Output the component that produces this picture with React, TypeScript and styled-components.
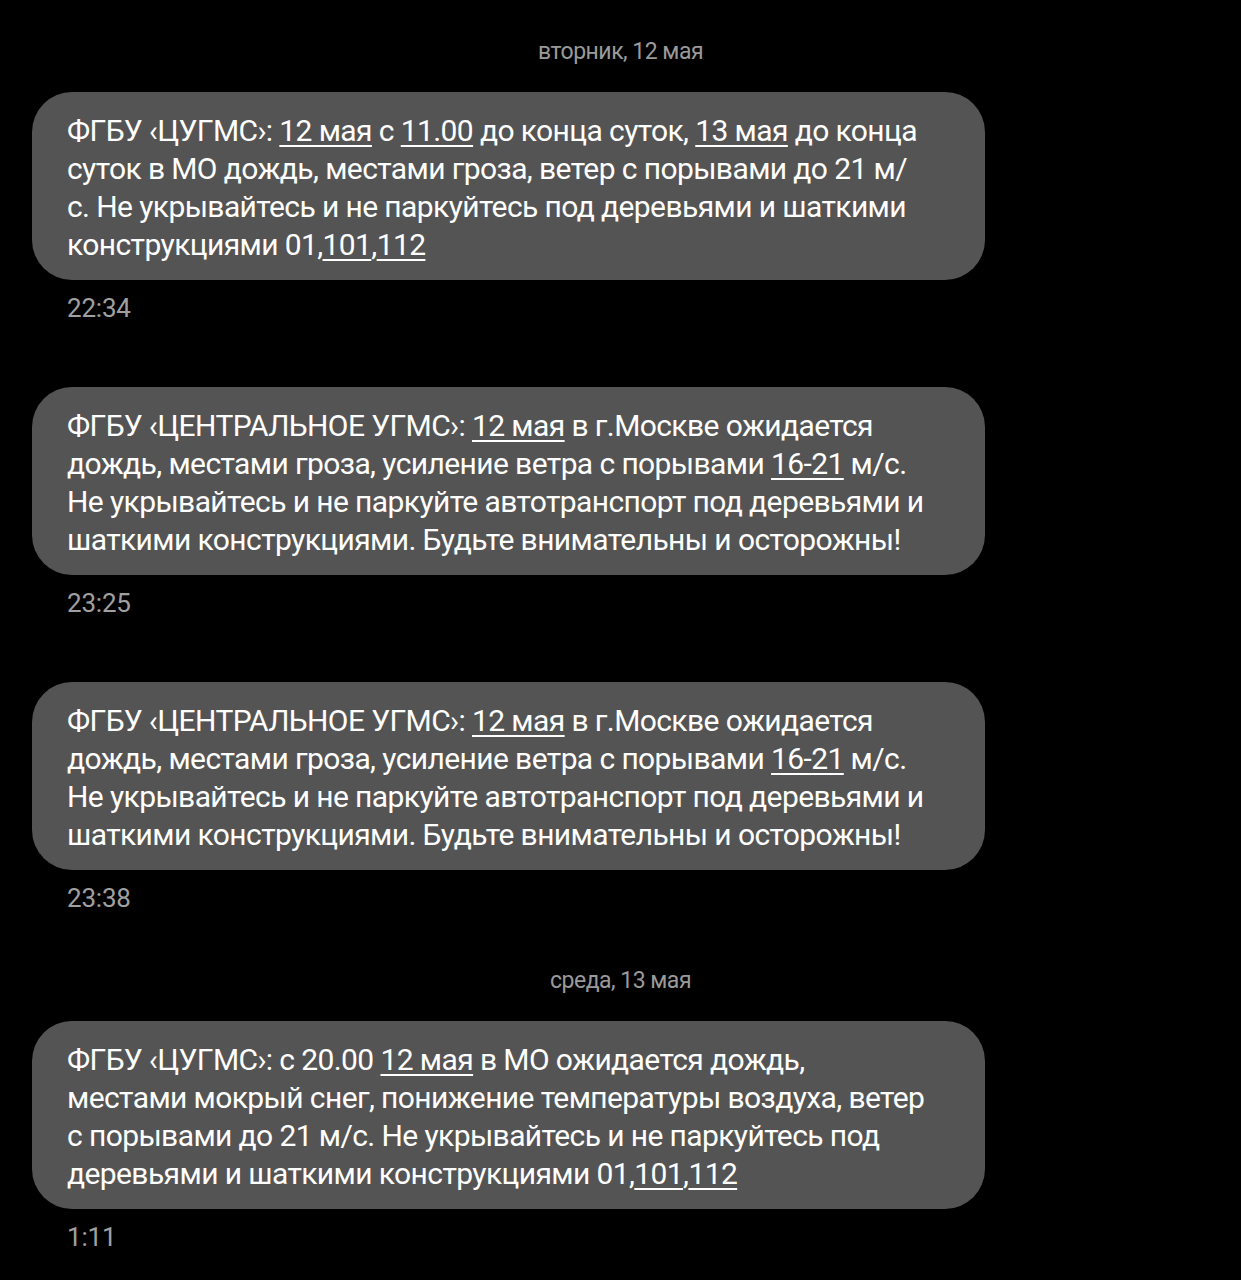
import React from "react";
import styled, { createGlobalStyle } from "styled-components";

const GlobalStyle = createGlobalStyle`
  html, body {
    margin: 0;
    padding: 0;
    background: #000;
  }
  body {
    font-family: "Roboto", "Noto Sans", sans-serif;
  }
`;

const Page = styled.div`
  min-height: 1280px;
  background: #000;
  padding: 38px 0 0 32px;
  box-sizing: border-box;
  display: flex;
  flex-direction: column;
`;

const DateLabel = styled.div<{ $gapTop?: number }>`
  width: 1177px;
  text-align: center;
  color: #9a9a9a;
  font-size: 23px;
  line-height: 28px;
  margin-top: ${(p) => p.$gapTop ?? 0}px;
  margin-bottom: 26px;
  letter-spacing: -0.5px;
`;

const Message = styled.div`
  display: flex;
  flex-direction: column;
  margin-bottom: 65px;

  &:last-child {
    margin-bottom: 0;
  }
`;

const Bubble = styled.div`
  width: 953px;
  box-sizing: border-box;
  background: #545454;
  border-radius: 40px;
  padding: 20px 30px 16px 35px;
  color: #fff;
  font-size: 30px;
  line-height: 38px;
  letter-spacing: -0.6px;
`;

const Line = styled.div`
  white-space: nowrap;
`;

const Link = styled.span`
  text-decoration: underline;
  text-decoration-thickness: 2px;
  text-underline-offset: 4px;
`;

const Time = styled.div`
  margin-top: 14px;
  padding-left: 35px;
  color: #a0a0a0;
  font-size: 26px;
  line-height: 28px;
  letter-spacing: -0.2px;
`;

const CentralText = () => (
  <>
    <Line>
      ФГБУ ‹ЦЕНТРАЛЬНОЕ УГМС›: <Link>12 мая</Link> в г.Москве ожидается
    </Line>
    <Line>
      дождь, местами гроза, усиление ветра с порывами <Link>16-21</Link> м/с.
    </Line>
    <Line>Не укрывайтесь и не паркуйте автотранспорт под деревьями и</Line>
    <Line>шаткими конструкциями. Будьте внимательны и осторожны!</Line>
  </>
);

export default function App() {
  return (
    <>
      <GlobalStyle />
      <Page>
        <DateLabel>вторник, 12 мая</DateLabel>

        <Message>
          <Bubble>
            <Line>
              ФГБУ ‹ЦУГМС›: <Link>12 мая</Link> с <Link>11.00</Link> до конца
              суток, <Link>13 мая</Link> до конца
            </Line>
            <Line>
              суток в МО дождь, местами гроза, ветер с порывами до 21 м/
            </Line>
            <Line>
              с. Не укрывайтесь и не паркуйтесь под деревьями и шаткими
            </Line>
            <Line>
              конструкциями 01,<Link>101</Link>,<Link>112</Link>
            </Line>
          </Bubble>
          <Time>22:34</Time>
        </Message>

        <Message>
          <Bubble>
            <CentralText />
          </Bubble>
          <Time>23:25</Time>
        </Message>

        <Message>
          <Bubble>
            <CentralText />
          </Bubble>
          <Time>23:38</Time>
        </Message>

        <DateLabel $gapTop={-10}>среда, 13 мая</DateLabel>

        <Message>
          <Bubble>
            <Line>
              ФГБУ ‹ЦУГМС›: с 20.00 <Link>12 мая</Link> в МО ожидается дождь,
            </Line>
            <Line>
              местами мокрый снег, понижение температуры воздуха, ветер
            </Line>
            <Line>
              с порывами до 21 м/с. Не укрывайтесь и не паркуйтесь под
            </Line>
            <Line>
              деревьями и шаткими конструкциями 01,<Link>101</Link>,
              <Link>112</Link>
            </Line>
          </Bubble>
          <Time>1:11</Time>
        </Message>
      </Page>
    </>
  );
}
